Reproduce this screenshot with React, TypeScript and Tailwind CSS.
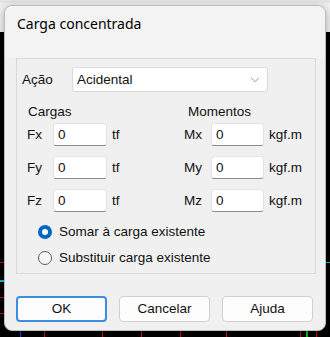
import { ChevronDown } from "lucide-react";

function Field({ label, unit, labelW, unitW, inputW }: { label: string; unit: string; labelW: string; unitW: string; inputW: string }) {
  return (
    <div className="flex items-center">
      <span className={`${labelW} shrink-0`}>{label}</span>
      <div
        className={`${inputW} h-[23px] shrink-0 bg-white border border-[#e3e3e3] border-b-[#8c8c8c] rounded-[3px] pl-[4px] flex items-center`}
      >
        0
      </div>
      <span className={`${unitW} shrink-0 ml-[5px]`}>{unit}</span>
    </div>
  );
}

function Radio({ checked, label }: { checked: boolean; label: string }) {
  return (
    <div className="flex items-center h-[20px] pl-[21px]">
      {checked ? (
        <span className="w-[14px] h-[14px] rounded-full bg-[#0067c0] flex items-center justify-center shrink-0">
          <span className="w-[6px] h-[6px] rounded-full bg-white" />
        </span>
      ) : (
        <span className="w-[14px] h-[14px] rounded-full border border-[#5c5c5c] bg-[#f7f7f7] shrink-0" />
      )}
      <span className="ml-[7px]">{label}</span>
    </div>
  );
}

export default function App() {
  return (
    <div className="relative w-[330px] h-[337px] overflow-hidden bg-black">
      {/* backdrop */}
      <div className="h-[32px] bg-[#f0f0f0] border-t-[3px] border-[#e4e4e4]" />
      <div className="absolute left-0 top-[262px] w-[5px] h-[1px] bg-[#e00000]" />
      <div className="absolute left-0 top-[280px] w-[5px] h-[2px] bg-[#00c8c8]" />
      <div className="absolute left-0 top-[297px] w-[5px] h-[1px] bg-[#e00000]" />
      <div className="absolute left-0 top-[313px] w-[5px] h-[1px] bg-[#e00000]" />
      <div className="absolute left-[20px] top-[331px] w-[1px] h-[6px] bg-[#2040ff]" />
      <div className="absolute left-[44px] top-[331px] w-[1px] h-[6px] bg-[#e00000]" />
      <div className="absolute left-[102px] top-[331px] w-[1px] h-[6px] bg-[#e00000]" />
      <div className="absolute left-[141px] top-[331px] w-[1px] h-[6px] bg-[#e00000]" />
      <div className="absolute left-[180px] top-[331px] w-[1px] h-[6px] bg-[#e00000]" />
      <div className="absolute left-[226px] top-[331px] w-[1px] h-[6px] bg-[#e00000]" />
      <div className="absolute left-[300px] top-[331px] w-[1px] h-[6px] bg-[#e00000]" />
      <div className="absolute left-[306px] top-[331px] w-[2px] h-[6px] bg-[#00c000]" />
      <div className="absolute left-[316px] top-[331px] w-[1px] h-[6px] bg-[#e00000]" />
      <div className="absolute right-0 top-[262px] w-[4px] h-[1px] bg-[#00c8c8]" />

      {/* dialog */}
      <div
        className="absolute left-[4px] top-[5px] w-[322px] h-[326px] rounded-[8px] border border-[#bdbdbd] bg-[#f0f0f0] shadow-[0_2px_8px_rgba(0,0,0,0.3)] text-[13.5px] text-[#111] leading-none"
        style={{ fontFamily: '"Liberation Sans", Arial, sans-serif' }}
      >
        <div
          className="pl-[12px] pt-[8px] h-[52px] text-[14px] leading-[20px] text-black bg-[#f3f3f3] rounded-t-[8px]"
          style={{ fontFamily: '"Noto Sans", "Open Sans", sans-serif' }}
        >
          Carga concentrada
        </div>

        <div className="ml-[11px] w-[300px] h-[216px] border border-[#dadada] flex flex-col">
          <div className="mt-[8px] h-[25px] flex items-center pl-[5px]">
            <span className="w-[50px]">Ação</span>
            <div className="w-[196px] h-[25px] bg-white border border-[#d9d9d9] rounded-[3px] flex items-center pl-[4px] pr-[5px]">
              <span className="flex-1">Acidental</span>
              <ChevronDown className="w-[14px] h-[14px] text-[#707070]" strokeWidth={1.25} />
            </div>
          </div>

          <div className="mt-[12px] h-[16px] flex items-center">
            <span className="ml-[11px] w-[160px]">Cargas</span>
            <span>Momentos</span>
          </div>

          <div className="mt-[3px] flex flex-col gap-[10px] pl-[10px]">
            {[
              ["Fx", "Mx"],
              ["Fy", "My"],
              ["Fz", "Mz"],
            ].map(([f, m]) => (
              <div key={f} className="flex items-center h-[23px]">
                <Field label={f} unit="tf" labelW="w-[26px]" inputW="w-[54px]" unitW="w-[72px]" />
                <Field label={m} unit="kgf.m" labelW="w-[27px]" inputW="w-[53px]" unitW="w-[40px]" />
              </div>
            ))}
          </div>

          <div className="mt-[10px] flex flex-col gap-[6px]">
            <Radio checked label="Somar à carga existente" />
            <Radio checked={false} label="Substituir carga existente" />
          </div>
        </div>

        <div className="mt-[22px] ml-[11px] flex gap-[12px]">
          <button className="w-[91px] h-[26px] bg-[#fdfdfd] border-2 border-[#3d8ee0] rounded-[4px] flex items-center justify-center">
            OK
          </button>
          <button className="w-[91px] h-[26px] bg-[#fdfdfd] border border-[#d0d0d0] rounded-[4px] flex items-center justify-center">
            Cancelar
          </button>
          <button className="w-[91px] h-[26px] bg-[#fdfdfd] border border-[#d0d0d0] rounded-[4px] flex items-center justify-center">
            Ajuda
          </button>
        </div>
      </div>
    </div>
  );
}
